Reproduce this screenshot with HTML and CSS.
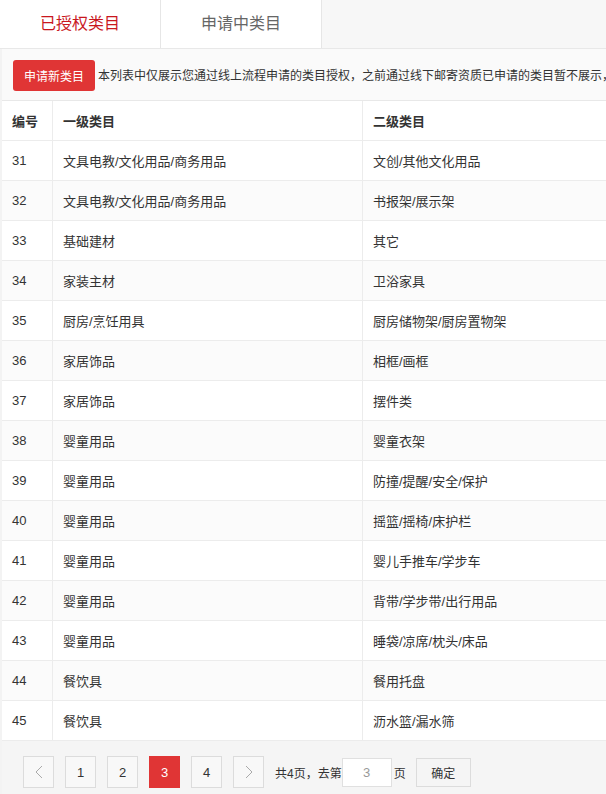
FILE: index.html
```html
<!DOCTYPE html>
<html lang="zh-CN">
<head>
  <meta charset="UTF-8">
  <meta name="viewport" content="width=device-width, initial-scale=1.0">
  <title>类目管理</title>
  <link rel="stylesheet" href="styles.css">
</head>
<body>
  <div class="tabs">
    <div class="tab active">已授权类目</div>
    <div class="tab">申请中类目</div>
    <div class="tab-rest"></div>
  </div>

  <div class="page">
    <div class="notice">
      <button class="btn-apply">申请新类目</button>
      <span class="notice-text">本列表中仅展示您通过线上流程申请的类目授权，之前通过线下邮寄资质已申请的类目暂不展示，</span>
    </div>

    <table class="cat-table">
      <thead>
        <tr>
          <th class="col-no">编号</th>
          <th class="col-first">一级类目</th>
          <th>二级类目</th>
        </tr>
      </thead>
      <tbody>
        <tr><td>31</td><td>文具电教/文化用品/商务用品</td><td>文创/其他文化用品</td></tr>
        <tr><td>32</td><td>文具电教/文化用品/商务用品</td><td>书报架/展示架</td></tr>
        <tr><td>33</td><td>基础建材</td><td>其它</td></tr>
        <tr><td>34</td><td>家装主材</td><td>卫浴家具</td></tr>
        <tr><td>35</td><td>厨房/烹饪用具</td><td>厨房储物架/厨房置物架</td></tr>
        <tr><td>36</td><td>家居饰品</td><td>相框/画框</td></tr>
        <tr><td>37</td><td>家居饰品</td><td>摆件类</td></tr>
        <tr><td>38</td><td>婴童用品</td><td>婴童衣架</td></tr>
        <tr><td>39</td><td>婴童用品</td><td>防撞/提醒/安全/保护</td></tr>
        <tr><td>40</td><td>婴童用品</td><td>摇篮/摇椅/床护栏</td></tr>
        <tr><td>41</td><td>婴童用品</td><td>婴儿手推车/学步车</td></tr>
        <tr><td>42</td><td>婴童用品</td><td>背带/学步带/出行用品</td></tr>
        <tr><td>43</td><td>婴童用品</td><td>睡袋/凉席/枕头/床品</td></tr>
        <tr><td>44</td><td>餐饮具</td><td>餐用托盘</td></tr>
        <tr><td>45</td><td>餐饮具</td><td>沥水篮/漏水筛</td></tr>
      </tbody>
    </table>

    <div class="pager">
      <a class="pg-btn pg-arrow">
        <svg width="8" height="14" viewBox="0 0 8 14"><polyline points="7,1 1,7 7,13" fill="none" stroke="#aaa" stroke-width="1"/></svg>
      </a>
      <a class="pg-btn">1</a>
      <a class="pg-btn">2</a>
      <a class="pg-btn current">3</a>
      <a class="pg-btn">4</a>
      <a class="pg-btn pg-arrow">
        <svg width="8" height="14" viewBox="0 0 8 14"><polyline points="1,1 7,7 1,13" fill="none" stroke="#aaa" stroke-width="1"/></svg>
      </a>
      <span class="pg-text">共4页，去第</span>
      <input class="pg-input" type="text" value="3">
      <span class="pg-text">页</span>
      <button class="pg-go">确定</button>
    </div>
  </div>
</body>
</html>
```

FILE: styles.css
```css
body {
  margin: 0;
  font-family: "Liberation Sans", "Noto Sans CJK SC", sans-serif;
  font-size: 13px;
  color: #333;
  background-color: #f3f3f3;
  overflow: hidden;
}

.tabs {
  display: flex;
  height: 48px;
  background-color: #fff;
  border-bottom: 1px solid #e8e8e8;
}

.tab {
  width: 160px;
  line-height: 48px;
  text-align: center;
  font-size: 16px;
  color: #666;
  border-right: 1px solid #e6e6e6;
}

.tab.active {
  color: #c9171e;
}

.tab-rest {
  flex: 1;
  background-color: #f7f7f7;
}

.page {
  margin-left: 2px;
  background-color: #fafafa;
}

.notice {
  display: flex;
  align-items: center;
  gap: 3px;
  height: 51px;
  padding-left: 11px;
  white-space: nowrap;
  overflow: hidden;
  border-bottom: 1px solid #e8e8e8;
}

.btn-apply {
  flex-shrink: 0;
  height: 31px;
  padding: 0 11px;
  font-family: inherit;
  font-size: 12px;
  color: #fff;
  background-color: #e03535;
  border: none;
  border-radius: 3px;
  margin-top: 1px;
}

.notice-text {
  font-size: 12px;
  color: #333;
}

.cat-table {
  width: 100%;
  border-collapse: collapse;
  table-layout: fixed;
  background-color: #fff;
}

.cat-table th,
.cat-table td {
  height: 39px;
  padding: 0 10px;
  text-align: left;
  border-bottom: 1px solid #ececec;
  border-right: 1px solid #ececec;
  white-space: nowrap;
}

.cat-table th {
  font-weight: bold;
  color: #333;
}

.cat-table td:last-child,
.cat-table th:last-child {
  border-right: none;
}

.cat-table tbody tr:nth-child(even) {
  background-color: #fbfbfb;
}

.col-no {
  width: 30px;
}

.col-first {
  width: 289px;
}

.pager {
  display: flex;
  align-items: center;
  gap: 11px;
  padding: 15px 0 10px 21px;
  background-color: #f5f5f5;
}

.pg-btn {
  display: flex;
  align-items: center;
  justify-content: center;
  width: 29px;
  height: 30px;
  border: 1px solid #dcdcdc;
  background-color: #f8f8f8;
  color: #333;
  font-size: 13px;
}

.pg-btn.current {
  background-color: #e03535;
  border-color: #e03535;
  color: #fff;
}

.pg-text {
  font-size: 12px;
  color: #333;
  margin-right: -11px;
}

.pg-input {
  box-sizing: border-box;
  width: 50px;
  height: 29px;
  margin: 0 -9px 0 0;
  padding: 0;
  border: 1px solid #e0e0e0;
  text-align: center;
  font-family: inherit;
  font-size: 13px;
  color: #999;
  background-color: #fff;
}

.pg-go {
  height: 29px;
  width: 55px;
  margin-left: 10px;
  font-family: inherit;
  font-size: 12px;
  color: #333;
  background-color: #f5f5f5;
  border: 1px solid #dcdcdc;
}
```
